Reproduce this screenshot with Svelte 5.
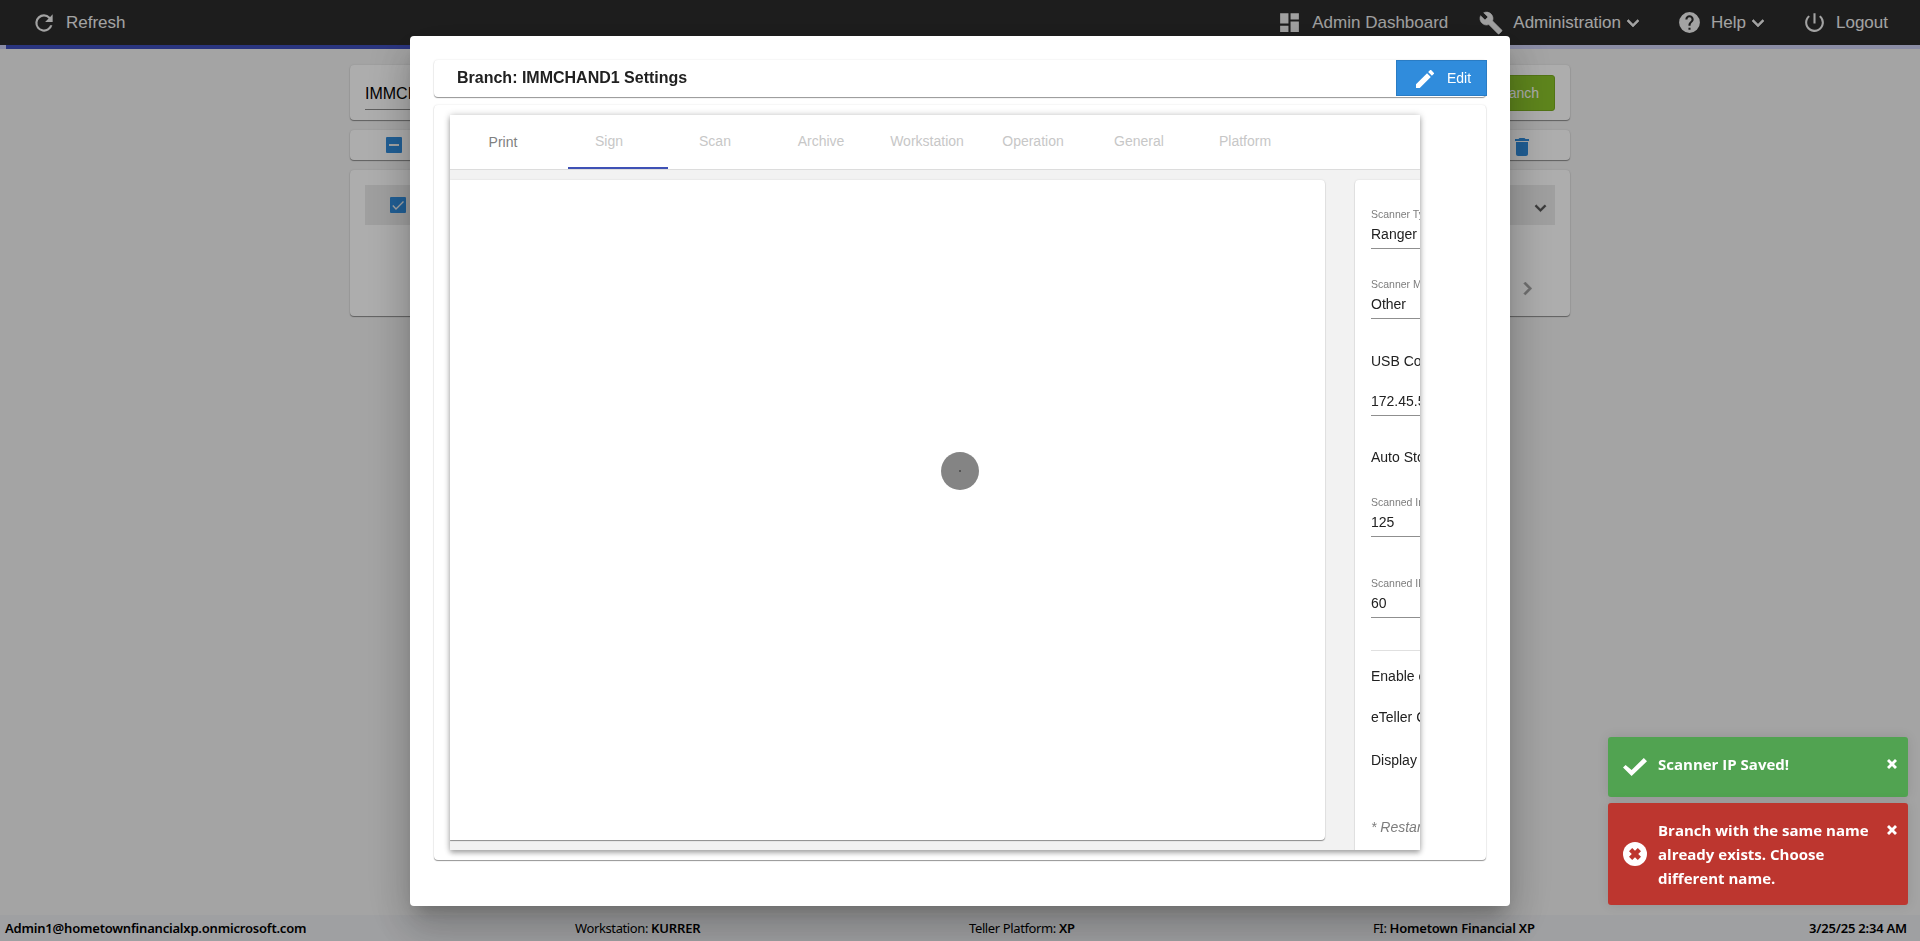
<script lang="ts">
	const tabs: string[] = ['Print', 'Sign', 'Scan', 'Archive', 'Workstation', 'Operation', 'General', 'Platform'];

	const close = 'M2.4 0 6 3.6 9.6 0 12 2.4 8.4 6 12 9.6 9.6 12 6 8.4 2.4 12 0 9.6 3.6 6 0 2.4z';
	const cross = 'M3.2 0 6 2.8 8.8 0 12 3.2 9.2 6 12 8.8 8.8 12 6 9.2 3.2 12 0 8.8 2.8 6 0 3.2z';
	const chevron = 'M7.41 8.59 12 13.17l4.59-4.58L18 10l-6 6-6-6z';
</script>

<div class="page">
	<header class="navbar">
		<div class="nav-item refresh">
			<svg viewBox="0 0 24 24" width="26" height="26">
				<path d="M17.65 6.35A7.96 7.96 0 0 0 12 4a8 8 0 1 0 7.73 10h-2.08A6 6 0 1 1 12 6c1.66 0 3.14.69 4.22 1.78L13 11h7V4z" />
			</svg>
			<span>Refresh</span>
		</div>
		<nav class="nav-right">
			<div class="nav-item dashboard">
				<svg viewBox="0 0 24 24" width="25" height="25">
					<path d="M3 13h8V3H3v10zm0 8h8v-6H3v6zm10 0h8V11h-8v10zm0-18v6h8V3h-8z" />
				</svg>
				<span>Admin Dashboard</span>
			</div>
			<div class="nav-item administration">
				<svg class="bold" viewBox="0 0 24 24" width="24" height="24">
					<path d="M22.7 19l-9.1-9.1c.9-2.3.4-5-1.5-6.9-2-2-5-2.4-7.4-1.3L9 6 6 9 1.6 4.7C.4 7.1.9 10.1 2.9 12.1c1.9 1.9 4.6 2.4 6.9 1.5l9.1 9.1c.4.4 1 .4 1.4 0l2.3-2.3c.5-.4.5-1.1.1-1.4z" />
				</svg>
				<span>Administration</span>
				<svg class="caret bold" viewBox="5 7 14 10" width="14" height="10"><path d={chevron} /></svg>
			</div>
			<div class="nav-item help">
				<svg viewBox="0 0 24 24" width="25" height="25">
					<path d="M12 2a10 10 0 1 0 0 20 10 10 0 0 0 0-20zm1 17h-2v-2h2zm2.07-7.75-.9.92C13.45 12.9 13 13.5 13 15h-2v-.5c0-1.1.45-2.1 1.17-2.83l1.24-1.26c.37-.36.59-.86.59-1.41a2 2 0 1 0-4 0H8a4 4 0 1 1 8 0c0 .88-.36 1.68-.93 2.25z" />
				</svg>
				<span>Help</span>
				<svg class="caret bold" viewBox="5 7 14 10" width="14" height="10"><path d={chevron} /></svg>
			</div>
			<div class="nav-item logout">
				<svg viewBox="0 0 24 24" width="25" height="25">
					<path d="M13 3h-2v10h2zm4.83 2.17-1.42 1.42A6.92 6.92 0 0 1 19 12a7 7 0 1 1-11.41-5.42L6.17 5.17A8.93 8.93 0 0 0 3 12a9 9 0 1 0 14.83-6.83z" />
				</svg>
				<span>Logout</span>
			</div>
		</nav>
	</header>
	<div class="progress"><div class="progress-value"></div></div>

	<main class="branches">
		<section class="card search">
			<div class="search-input">IMMCHAND1</div>
			<button class="add-branch">Add Branch</button>
		</section>
		<section class="card toolbar">
			<svg class="box" viewBox="0 0 16 16" width="16" height="16">
				<rect width="16" height="16" rx="1" />
				<path d="M3 8h10" stroke="#f2f2f2" stroke-width="2" />
			</svg>
			<svg class="trash" viewBox="5 3 14 18" width="14" height="18">
				<path d="M6 19c0 1.1.9 2 2 2h8c1.1 0 2-.9 2-2V7H6zM19 4h-3.5l-1-1h-5l-1 1H5v2h14z" />
			</svg>
		</section>
		<section class="card list">
			<div class="branch-row">
				<svg class="box" viewBox="0 0 16 16" width="16" height="16">
					<rect width="16" height="16" rx="1" />
					<path d="M2.8 8.6 6 12l7.5-7.6" fill="none" stroke="#f2f2f2" stroke-width="1.4" />
				</svg>
				<svg class="expand bold" viewBox="5 7 14 10" width="13" height="10"><path d={chevron} /></svg>
			</div>
			<div class="paginator">
				<svg class="bold" viewBox="8 5 8 14" width="9" height="15">
					<path d="M10 6 8.59 7.41 13.17 12l-4.58 4.59L10 18l6-6z" />
				</svg>
			</div>
		</section>
	</main>

	<footer>
		<div><b>Admin1@hometownfinancialxp.onmicrosoft.com</b></div>
		<div>Workstation: <b>KURRER</b></div>
		<div>Teller Platform: <b>XP</b></div>
		<div>FI: <b>Hometown Financial XP</b></div>
		<div><b>3/25/25 2:34 AM</b></div>
	</footer>
</div>

<div class="backdrop">
	<div class="dialog">
		<div class="card title">
			<h2>Branch: IMMCHAND1 Settings</h2>
			<button class="edit">
				<svg viewBox="3 3 18 18" width="18" height="18">
					<path d="M3 17.25V21h3.75L17.81 9.94l-3.75-3.75zM20.71 7.04a1 1 0 0 0 0-1.41l-2.34-2.34a1 1 0 0 0-1.41 0l-1.83 1.83 3.75 3.75z" />
				</svg>
				<span>Edit</span>
			</button>
		</div>
		<div class="card body">
			<div class="settings">
				<div class="tabs">
					{#each tabs as tab, i}
						<div class="tab" class:enabled={i === 0}>{tab}</div>
					{/each}
					<div class="ink-bar"></div>
				</div>
				<div class="panes">
					<div class="card preview"></div>
					<div class="card scanner">
						<div class="field">
							<label for="type">Scanner Type</label>
							<div id="type" class="value">Ranger</div>
						</div>
						<div class="field">
							<label for="model">Scanner Model</label>
							<div id="model" class="value">Other</div>
						</div>
						<div class="option usb">USB Connected</div>
						<div class="value ip">172.45.5.10</div>
						<div class="option auto">Auto Store</div>
						<div class="field">
							<label for="image">Scanned Image</label>
							<div id="image" class="value">125</div>
						</div>
						<div class="field last">
							<label for="id">Scanned ID</label>
							<div id="id" class="value">60</div>
						</div>
						<hr />
						<div class="option enable">Enable eTeller</div>
						<div class="option capture">eTeller Capture</div>
						<div class="option display">Display</div>
						<div class="note">* Restart required</div>
					</div>
				</div>
			</div>
		</div>
	</div>
</div>

<div class="spinner"><span></span></div>

<div class="toasts">
	<div class="toast success">
		<svg viewBox="0 0 24 18" width="24" height="18"><path d="M2.6 6.9 0 9.5 8.6 18 24 3.2 20.8 0 8.6 12.1z" /></svg>
		<p>Scanner IP Saved!</p>
		<svg class="close" viewBox="0 0 12 12" width="10" height="10"><path d={close} /></svg>
	</div>
	<div class="toast error">
		<svg viewBox="0 0 24 24" width="24" height="24">
			<circle cx="12" cy="12" r="12" />
			<path transform="translate(6 6)" fill="#bd362f" d={cross} />
		</svg>
		<p>Branch with the same name already exists. Choose different name.</p>
		<svg class="close" viewBox="0 0 12 12" width="10" height="10"><path d={close} /></svg>
	</div>
</div>

<style>
	:global(body) {
		margin: 0;
		overflow: hidden;
		font-family: 'Liberation Sans', Arial, sans-serif;
	}
	.page {
		display: flex;
		flex-direction: column;
		height: 941px;
		background: #f2f2f2;
	}
	svg {
		flex: none;
		fill: currentColor;
	}
	.bold {
		stroke: currentColor;
		stroke-width: 0.6;
	}
	button {
		font-family: inherit;
	}
	.navbar {
		display: flex;
		align-items: center;
		justify-content: space-between;
		box-sizing: border-box;
		height: 45px;
		padding: 0 32px 0 31px;
		background: #2c2c2c;
		color: #f0f0f0;
		font-size: 17px;
	}
	.nav-item,
	.nav-right {
		display: flex;
		align-items: center;
	}
	.refresh {
		gap: 9px;
	}
	.dashboard {
		gap: 10px;
		margin-right: 31px;
	}
	.administration {
		gap: 10px;
		margin-right: 37px;
	}
	.administration .caret {
		margin-left: -5px;
	}
	.help {
		gap: 9px;
		margin-right: 37px;
	}
	.help .caret {
		margin-left: -4px;
	}
	.logout {
		gap: 9px;
	}
	.progress {
		height: 4px;
		padding-left: 5.5px;
		background: #cdd0f4;
	}
	.progress-value {
		width: 1100px;
		height: 4px;
		background: #3f4fbc;
	}
	.branches {
		display: flex;
		flex-direction: column;
		flex: 1;
		gap: 10px;
		width: 1220px;
		margin: 16px auto 0;
	}
	.card {
		box-sizing: border-box;
		border-radius: 4px;
		background: #fff;
		box-shadow: 0 1px 1px rgba(0, 0, 0, 0.4), 0 0 2px rgba(0, 0, 0, 0.12);
	}
	.search {
		display: flex;
		justify-content: space-between;
		align-items: flex-start;
		height: 55px;
		padding: 10px 15px;
	}
	.search-input {
		width: 300px;
		height: 34px;
		border-bottom: 1px solid #8c8c8c;
		font-size: 16px;
		line-height: 37px;
	}
	.add-branch {
		height: 36px;
		padding: 0 15px;
		border: 1px solid #7aac20;
		border-radius: 3px;
		background: #8bc42a;
		color: #fff;
		font-size: 14px;
	}
	.toolbar {
		display: flex;
		align-items: center;
		justify-content: space-between;
		height: 30px;
		padding: 0 41px 0 36px;
		color: #308cdc;
	}
	.trash {
		margin-top: 4px;
	}
	.list {
		height: 146px;
		padding: 15px;
	}
	.branch-row {
		display: flex;
		align-items: center;
		justify-content: space-between;
		height: 40px;
		padding: 0 8px 0 25px;
		background: #ebebeb;
	}
	.branch-row .box {
		color: #308cdc;
	}
	.expand {
		margin-top: 6px;
		color: #555;
	}
	.paginator {
		display: flex;
		justify-content: flex-end;
		padding: 56px 23px 0 0;
		color: #a4a4a4;
	}
	footer {
		display: grid;
		grid-template-columns: 570px 394px 404px 1fr auto;
		align-items: center;
		height: 26px;
		padding: 0 13px 0 5px;
		background: #ebecef;
		font: 13px 'Noto Sans', 'Open Sans', sans-serif;
		letter-spacing: -0.38px;
	}
	footer b {
		font-weight: 600;
		letter-spacing: -0.2px;
	}

	.backdrop {
		position: fixed;
		inset: 0;
		display: flex;
		align-items: center;
		justify-content: center;
		background: rgba(0, 0, 0, 0.32);
	}
	.dialog {
		box-sizing: border-box;
		width: 1100px;
		height: 870px;
		padding: 24px;
		border-radius: 4px;
		background: #fff;
		box-shadow: 0 11px 15px -7px rgba(0, 0, 0, 0.2), 0 24px 38px 3px rgba(0, 0, 0, 0.14), 0 9px 46px 8px rgba(0, 0, 0, 0.12);
	}
	.title {
		display: flex;
		justify-content: space-between;
		height: 37px;
		padding-left: 23px;
	}
	.title h2 {
		margin: 0;
		color: #212121;
		font-size: 16px;
		line-height: 35px;
	}
	.edit {
		display: flex;
		align-items: center;
		gap: 13px;
		width: 91px;
		height: 36px;
		margin-right: -1px;
		padding: 0 0 0 19px;
		border: 1px solid #2a7cc4;
		background: #308cdc;
		color: #fff;
		font-size: 14px;
	}
	.edit svg {
		margin-top: 2px;
	}
	.body {
		height: 755px;
		margin-top: 8px;
		padding: 10px 16px;
	}
	.settings {
		display: flex;
		flex-direction: column;
		width: 970px;
		height: 735px;
		overflow: hidden;
		background: #f2f2f2;
		box-shadow: 0 3px 5px rgba(0, 0, 0, 0.28), 0 0 7px rgba(0, 0, 0, 0.2);
	}
	.tabs {
		position: relative;
		display: flex;
		height: 54px;
		border-bottom: 1px solid #dcdcdc;
		background: #fff;
	}
	.tab {
		width: 106px;
		color: #c7c7c7;
		font-size: 14px;
		line-height: 52px;
		text-align: center;
	}
	.tab.enabled {
		color: #808080;
		line-height: 54px;
	}
	.ink-bar {
		position: absolute;
		bottom: 0;
		left: 118px;
		width: 100px;
		height: 2px;
		background: #3f51b5;
	}
	.panes {
		display: flex;
		gap: 30px;
		padding-top: 10px;
	}
	.preview {
		flex: none;
		width: 875px;
		height: 660px;
		border-radius: 0 4px 4px 0;
	}
	.scanner {
		flex: none;
		width: 420px;
		height: 740px;
		padding: 27px 16px;
		color: #212121;
		font-size: 14px;
	}
	.field {
		height: 70px;
	}
	.field label {
		display: block;
		color: #7d7d7d;
		font-size: 10.5px;
		line-height: 14px;
	}
	.value {
		height: 27px;
		border-bottom: 1px solid #8f8f8f;
		line-height: 26px;
		white-space: nowrap;
	}
	.option,
	.note {
		height: 20px;
		line-height: 20px;
		white-space: nowrap;
	}
	.usb {
		margin-top: 4px;
	}
	.ip {
		margin-top: 17px;
	}
	.auto {
		margin: 31px 0 28px;
	}
	.field + .field.last {
		height: 74px;
		margin-top: 11px;
	}
	hr {
		height: 1px;
		margin: 0;
		border: 0;
		background: #e0e0e0;
	}
	.enable {
		margin-top: 15px;
	}
	.capture {
		margin-top: 21px;
	}
	.display {
		margin-top: 23px;
	}
	.note {
		margin-top: 47px;
		color: #7d7d7d;
		font-style: italic;
	}

	.spinner {
		position: fixed;
		top: 452px;
		left: 941px;
		display: flex;
		align-items: center;
		justify-content: center;
		width: 38px;
		height: 38px;
		border-radius: 50%;
		background: #848484;
	}
	.spinner span {
		width: 2px;
		height: 2px;
		background: #555;
	}
	.toasts {
		position: fixed;
		right: 12px;
		bottom: 36px;
		display: flex;
		flex-direction: column;
		gap: 6px;
		width: 300px;
	}
	.toast {
		display: flex;
		align-items: center;
		box-sizing: border-box;
		padding: 15px 11px 15px 15px;
		border-radius: 3px;
		color: #fff;
		box-shadow: 0 0 12px rgba(0, 0, 0, 0.1);
		font: 700 15px/24px 'Open Sans', 'Noto Sans', sans-serif;
	}
	.toast p {
		flex: 1;
		margin: 0 0 0 11px;
	}
	.close {
		align-self: flex-start;
		margin-top: 7px;
	}
	.success {
		height: 60px;
		background: #51a351;
	}
	.success p {
		margin-top: -6px;
	}
	.error {
		height: 102px;
		background: #bd362f;
	}
</style>
